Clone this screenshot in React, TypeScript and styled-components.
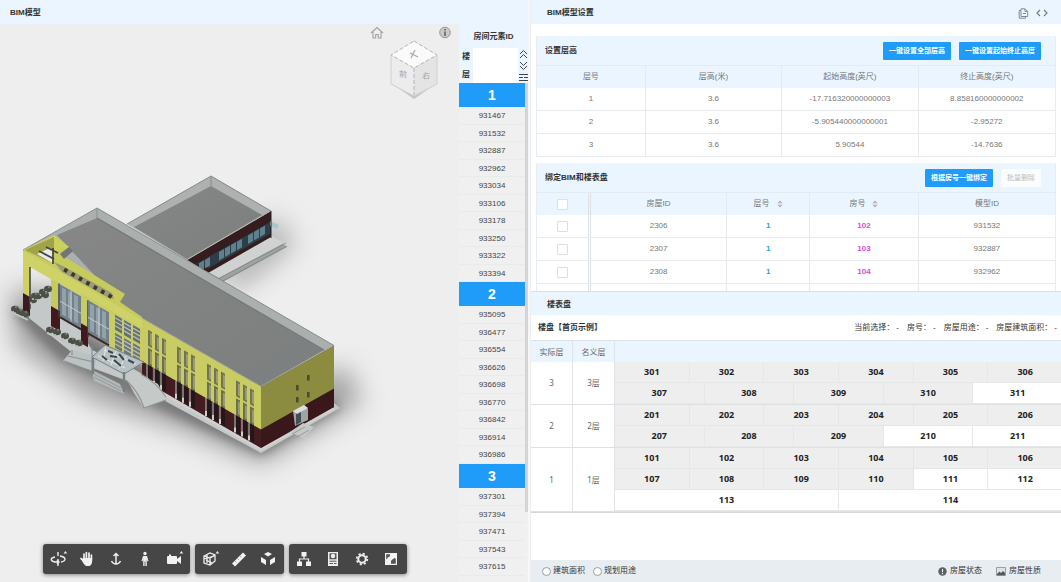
import React from "react";
import styled, { createGlobalStyle } from "styled-components";

const GlobalStyle = createGlobalStyle`
  * { box-sizing: border-box; }
  body {
    margin: 0;
    background: #fff;
    color: #333;
    font: 8px/12px "Liberation Sans", "Noto Sans CJK SC", sans-serif;
  }
  button, input { font: inherit; color: inherit; margin: 0; padding: 0; }
  button { border: 0; background: none; cursor: pointer; }
  h1, h2, h3, ul, p, dl, dd { margin: 0; padding: 0; font-size: 8px; }
  ul { list-style: none; }
`;

const BLUE = "#1f9bfa";
const PALE = "#eaf5ff";

const Page = styled.main`
  display: grid;
  grid-template-columns: minmax(0, 530fr) minmax(0, 531fr);
  height: 100vh;
  overflow: hidden;
`;

const ModelPanel = styled.section`
  display: flex;
  flex-direction: column;
  min-height: 0;
  border-right: 2px solid #f6f7f8;
`;

const RightColumn = styled.div`
  display: flex;
  flex-direction: column;
  min-height: 0;
`;

const HalfPanel = styled.section`
  flex: 1 1 0;
  min-height: 0;
  display: flex;
  flex-direction: column;
  overflow: hidden;
  border-left: 1px solid #eceef0;
`;

const PanelHeader = styled.header<{ $inset?: number; $ruled?: boolean }>`
  flex: none;
  display: flex;
  align-items: center;
  justify-content: space-between;
  height: 24px;
  padding: 2px 13px 0 ${(p) => p.$inset ?? 10}px;
  background: ${PALE};
  border-top: ${(p) => (p.$ruled ? "1px solid #dcdfe2" : "0")};
`;

const HeaderActions = styled.div`
  display: flex;
  align-items: center;
  gap: 7px;
  button { display: flex; }
`;

const ModelBody = styled.div`
  flex: 1;
  min-height: 0;
  display: flex;
`;

const Viewer = styled.div`
  position: relative;
  flex: 1;
  min-width: 0;
  overflow: hidden;
  background: #eeeeee;
`;

const Scene = styled.svg`
  display: block;
`;

const ViewerCorner = styled.div`
  position: absolute;
  top: 2px;
  right: 7px;
  display: flex;
  justify-content: space-between;
  width: 82px;
`;

const CubeButton = styled.button`
  position: absolute;
  top: 14px;
  right: 19px;
`;

const Toolbar = styled.div`
  position: absolute;
  bottom: 8px;
  left: 43px;
  display: flex;
  gap: 5px;
`;

const ToolGroup = styled.div`
  display: flex;
  padding: 0 1px;
  height: 30px;
  border-radius: 3px;
  background: #464646;
  box-shadow: 0 1px 4px rgba(0, 0, 0, 0.45);
`;

const ToolButton = styled.button`
  width: 29px;
  display: flex;
  align-items: center;
  justify-content: center;
`;

const Sidebar = styled.aside`
  flex: none;
  width: 69px;
  display: flex;
  flex-direction: column;
  min-height: 0;
  background: #f0f0f0;
`;

const SidebarTitle = styled.h2`
  flex: none;
  height: 24px;
  line-height: 26px;
  text-align: center;
  background: ${PALE};
`;

const FloorFilter = styled.div`
  flex: none;
  display: flex;
  height: 35px;
  background: ${PALE};
  label {
    width: 14px;
    padding: 0 3px;
    font-weight: bold;
    line-height: 18px;
    word-break: break-all;
  }
  input {
    width: 45px;
    border: 0;
    background: #fff;
  }
`;

const FilterIcons = styled.div`
  flex: 1;
  display: flex;
  flex-direction: column;
  align-items: center;
  justify-content: space-between;
  padding-top: 1px;
  button { display: flex; }
`;

const ScrollArea = styled.div`
  flex: 1;
  min-height: 0;
  display: flex;
  overflow: hidden;
`;

const FloorList = styled.div`
  flex: 1;
  min-width: 0;
`;

const FloorHeading = styled.h3`
  height: 24px;
  background: ${BLUE};
  color: #fff;
  font-size: 14px;
  line-height: 24px;
  text-align: center;
`;

const ElementRow = styled.li`
  height: 17px;
  border-bottom: 1px solid #e9eaea;
  line-height: 17px;
  text-align: center;
  color: #444;
  &:nth-child(odd) { height: 18px; }
`;

const ScrollThumb = styled.div`
  flex: none;
  width: 3px;
  height: 86%;
  background: #d2d4d6;
`;

const SettingsBody = styled.div`
  display: flex;
  flex-direction: column;
  gap: 6px;
  padding: 12px 5px 0;
`;

const Card = styled.section`
  border: solid #e9edf0;
  border-width: 0 1px;
`;

const CardHeader = styled.header`
  display: flex;
  align-items: center;
  justify-content: space-between;
  height: 29px;
  padding: 0 14px 0 8px;
  background: ${PALE};
`;

const ButtonRow = styled.div`
  display: flex;
  gap: 8px;
`;

const ActionButton = styled.button`
  height: 18px;
  padding: 0 6px;
  border-radius: 1px;
  background: ${BLUE};
  color: #fff;
  font-size: 7px;
  font-weight: bold;
  line-height: 18px;
  white-space: nowrap;
  &:disabled { background: #fbfcfd; color: #b9bcc0; font-weight: normal; }
`;

const DataTable = styled.table`
  width: 100%;
  table-layout: fixed;
  border-collapse: separate;
  border-spacing: 0;
  color: #777;
  th, td {
    height: 23px;
    padding: 0;
    border: solid #e8ebee;
    border-width: 0 1px 1px 0;
    text-align: center;
    font-weight: normal;
  }
  th { background: ${PALE}; border-color: #e2ebf3; border-width: 1px 1px 0 0; }
  th:last-child, td:last-child { border-right: 0; }
`;

const CheckCell = styled.td`
  border-right: 3px double #dde1e5 !important;
`;

const Check = styled.input`
  appearance: none;
  display: block;
  width: 11px;
  height: 11px;
  margin: 0 auto;
  border: 1px solid #dcdfe3;
  border-radius: 1px;
  background: #fff;
`;

const Strong = styled.strong<{ $tone: string }>`
  color: ${(p) => p.$tone};
`;

const SortHead = styled.span`
  display: inline-flex;
  align-items: center;
  gap: 7px;
`;

const BlockTitle = styled.div`
  flex: none;
  display: flex;
  align-items: center;
  justify-content: space-between;
  height: 26px;
  padding: 0 4px 0 7px;
  border-bottom: 1px solid #dfe2e5;
`;

const Facts = styled.dl`
  display: flex;
  gap: 8px;
  white-space: nowrap;
  div { display: flex; gap: 2px; }
`;

const MatrixArea = styled.div`
  flex: 1;
  min-height: 0;
  overflow: hidden;
`;

const Matrix = styled.table`
  width: calc(100% + 2px);
  table-layout: fixed;
  border-collapse: separate;
  border-spacing: 0;
  border-bottom: 1px solid #d5d8da;
  color: #666;
  font-family: "Noto Sans", "Noto Sans CJK SC", sans-serif;
  th { height: 21px; background: ${PALE}; font-weight: normal; }
  th, td { padding: 0; text-align: center; border-right: 1px solid #e0e4e8; }
  th:last-child, td:last-child { border-right: 0; }
  td { border-bottom: 1px solid #dfe2e4; }
`;

const RoomLine = styled.div`
  display: flex;
`;

const Room = styled.button<{ $free?: boolean }>`
  flex: 1 1 0;
  height: 21px;
  border: solid #e5e7e8;
  border-width: 0 1px 1px 0;
  background: ${(p) => (p.$free ? "#fff" : "#eeeeee")};
  color: #222;
  font-size: 9px;
  font-weight: bold;
  line-height: 20px;
`;

const Footer = styled.footer`
  flex: none;
  display: flex;
  align-items: center;
  justify-content: space-between;
  height: 22px;
  padding: 0 20px 0 11px;
  background: #e8edf2;
`;

const FooterGroup = styled.div<{ $gap: number }>`
  display: flex;
  gap: ${(p) => p.$gap}px;
`;

const RadioLabel = styled.label`
  display: flex;
  align-items: center;
  gap: 2px;
  input {
    appearance: none;
    width: 9px;
    height: 9px;
    border: 1px solid #999da1;
    border-radius: 50%;
    background: #fff;
  }
`;

const Legend = styled.button`
  display: flex;
  align-items: center;
  gap: 3px;
`;

/* Building model, drawn in an isometric projection */

const SLOPE = 0.5735;
const front = (x: number, v: number) => `${x},${(250 + (x - 23) * SLOPE + v).toFixed(1)}`;
const frontQuad = (x1: number, x2: number, v1: number, v2: number) =>
  [front(x1, v1), front(x2, v1), front(x2, v2), front(x1, v2)].join(" ");
const side = (x: number, v: number) => `${x},${(386.5 - (x - 261) * 0.562 + v).toFixed(1)}`;
const sideQuad = (x1: number, x2: number, v1: number, v2: number) =>
  [side(x1, v1), side(x2, v1), side(x2, v2), side(x1, v2)].join(" ");

const windowBays = [148, 177, 207, 236];

const Building = () => (
  <Scene width="458" height="558" viewBox="0 24 458 558" aria-label="BIM建筑模型">
    <defs>
      <filter id="soft" x="-30%" y="-30%" width="160%" height="160%">
        <feGaussianBlur stdDeviation="13" />
      </filter>
      <filter id="tight" x="-30%" y="-30%" width="160%" height="160%">
        <feGaussianBlur stdDeviation="5" />
      </filter>
      <linearGradient id="roof" x1="0" y1="0" x2="1" y2="1">
        <stop offset="0" stopColor="#868786" />
        <stop offset="1" stopColor="#7c7f7f" />
      </linearGradient>
    </defs>
    <polygon points="10,290 60,290 270,405 345,365 362,402 262,464 180,430 90,400 15,345" fill="#555" opacity=".5" filter="url(#soft)" />
    <polygon points="215,275 275,215 296,245 240,290" fill="#777" opacity=".5" filter="url(#soft)" />
    <polygon points="12,312 40,308 262,440 334,400 341,408 262,456 150,405 60,360" fill="#444" opacity=".45" filter="url(#tight)" />

    {/* rear wing */}
    <polygon points="205,272 271,235 287,247 223,282" fill="#9fa2a2" />
    <polygon points="208,272 271,235 284,243 219,278" fill="#d0d2d1" />
    <path d="M216 280L286 243M219 283L287 246" stroke="#777c7d" strokeWidth=".7" />
    <polygon points="187,260 271,211 271,237 208,273" fill="#351c1e" />
    <polygon points="196,264 270,222 270,234 209,268" fill="#2c3e49" />
    {[199, 205, 219, 225, 231, 237, 248, 254, 260].map((x) => (
      <polygon key={x} points={`${x},${264.5 - (x - 197) * 0.57} ${x + 5},${261.5 - (x - 197) * 0.57} ${x + 5},${270 - (x - 197) * 0.57} ${x},${273 - (x - 197) * 0.57}`} fill="#6e929e" opacity=".8" />
    ))}
    <polygon points="270,221 279,225 277,229 270,226" fill="#a9c7c9" />
    <path d="M271 211V238" stroke="#20282b" strokeWidth="1" />
    <polygon points="127,224 211,176 271,211 187,260" fill="#aeb1b0" />
    <polygon points="134,227 211,186 262,215 187,259" fill="url(#roof)" />
    <path d="M127 224L211 176L271 211" stroke="#70787a" fill="none" strokeWidth=".8" />
    <path d="M211 177V186" stroke="#7c8082" strokeWidth=".8" />

    {/* main volume: base and walls */}
    <polygon points="30,297 55,287 92,350 132,368 261,444 334,403 340,408 261,453 130,382 90,367 29,318" fill="#c5c8c8" />
    <polygon points={frontQuad(23, 30, 0, 62)} fill="#3c1b20" />
    <polygon points={frontQuad(51, 58, 12, 58)} fill="#c6ca5c" />
    <polygon points={frontQuad(51, 60, 40, 60)} fill="#43191e" />
    <polygon points={frontQuad(142, 261, 0, 62)} fill="#421c20" />
    <polygon points={frontQuad(23, 30, 0, 43)} fill="#cfd163" />
    <polygon points={frontQuad(23, 142, 0, 13)} fill="#ced267" />
    <polygon points={frontQuad(81, 142, 10, 47)} fill="#c7cc65" />
    <polygon points={frontQuad(142, 261, 0, 43)} fill="#c8cc62" />
    <polygon points={frontQuad(81, 88, 40, 60)} fill="#43191e" />
    <path d={`M${front(30, 13)}L${front(30, 55)}M${front(59, 13)}L${front(59, 47)}M${front(88, 13)}L${front(88, 50)}`} stroke="#41403b" strokeWidth="1.5" />
    {[60, 88].map((x) => (
      <g key={x}>
        <polygon points={frontQuad(x, x + 21, 13, 45)} fill="#71808b" />
        {[2, 8, 14].map((d) => (
          <polygon key={d} points={frontQuad(x + d, x + d + 4, 15, 42)} fill="#93a1aa" />
        ))}
        <path d={`M${front(x, 30)}L${front(x + 21, 30)}M${front(x + 11, 13)}L${front(x + 11, 44)}`} stroke="#c5cacb" strokeWidth="1" />
        <path d={`M${front(x, 46)}L${front(x + 21, 46)}`} stroke="#382629" strokeWidth="2" />
      </g>
    ))}
    {[115, 124, 133].map((x) => (
      <g key={x}>
        <polygon points={frontQuad(x, x + 7, 12, 27)} fill="#66706f" />
        <polygon points={frontQuad(x, x + 7, 30, 45)} fill="#6e7777" />
        {[15, 19, 23, 33, 37, 41].map((v) => (
          <path key={v} d={`M${front(x, v)}L${front(x + 7, v)}`} stroke="#b6bcb8" strokeWidth="1.3" />
        ))}
      </g>
    ))}
    {windowBays.map((bay) =>
      [0, 7, 14].map((d) => (
        <g key={bay + d}>
          <polygon points={frontQuad(bay + d, bay + d + 4, 8, 24)} fill="#74754e" />
          <polygon points={frontQuad(bay + d + 2, bay + d + 4, 10, 22)} fill="#9a9b78" />
          <polygon points={frontQuad(bay + d, bay + d + 4, 26, 43)} fill="#6e6f4c" />
          <polygon points={frontQuad(bay + d + 2, bay + d + 4, 28, 41)} fill="#969876" />
          <polygon points={frontQuad(bay + d, bay + d + 4, 43, 60)} fill="#22171b" />
          <path d={`M${front(bay + d - 1, 43)}L${front(bay + d - 1, 58)}`} stroke="#b0aaa3" strokeWidth="1.2" />
          <path d={`M${front(bay + d - 1, 56)}L${front(bay + d - 1, 61)}`} stroke="#cfcfcd" strokeWidth="2" />
        </g>
      )),
    )}
    <polygon points={sideQuad(261, 334, 0, 62)} fill="#3a171b" />
    <polygon points={sideQuad(261, 334, 0, 43)} fill="#8b8c40" />
    <path d={`M${front(142, 63)}L${front(261, 63)}L${side(334, 63)}`} stroke="#d0d1d0" strokeWidth="2.5" fill="none" />
    {[[296, 385], [307, 375], [296, 397], [307, 392]].map(([x, y]) => (
      <rect key={`${x}-${y}`} x={x} y={y} width="2.6" height="5.5" fill="#4c4b2c" />
    ))}
    <polygon points="293,411 304,405 308,409 308,420 295,426" fill="#9da5a5" />
    <polygon points="296,413 301,411 301,422 296,425" fill="#435057" />
    <polygon points="293,411 304,405 308,408 297,414" fill="#dddfde" />
    <polygon points="290,432 303,423 314,427 303,438" fill="#c4c8c6" />
    <path d="M292 434L305 427M297 437L309 430" stroke="#858a89" strokeWidth=".7" />

    {/* main roof */}
    <polygon points="23,250 97,208 334,345.5 261,386.5" fill="#abafae" />
    <polygon points="57,235 97,218 324,350 261,386 125,308" fill="url(#roof)" />
    <path d="M97 218L324 350" stroke="#737a7b" strokeWidth="1.3" />
    <path d="M23 250L97 208L334 345.5" stroke="#7f8788" fill="none" strokeWidth=".9" />
    <path d="M97 209V218" stroke="#858989" strokeWidth=".8" />
    <polygon points="23,250 54,235 69,247 60,254 125,294 120,302 142,317 142,320" fill="#c7cb5c" />
    <polygon points="25,250 54,237 54,264" fill="#a1a34b" />
    <polygon points="37,254 50,248 54,252 54,264" fill="#e9eaea" />
    <polygon points="54,235 69,247 54,253" fill="#cbd05c" />
    <path d="M39 251L54 259M46 247L58 253M53 248V264" stroke="#45433a" strokeWidth="1.8" />
    <polygon points="54,262 63,266 112,293 114,299 105,296 62,272" fill="#9c9a79" />
    {[0, 1, 2, 3, 4, 5, 6].map((i) => (
      <rect key={i} x={64 + i * 7.4} y={268 + i * 4.3} width="3.6" height="4" fill="#373a28" transform={`rotate(28 ${65 + i * 7.4} ${270 + i * 4.3})`} />
    ))}
    <polygon points="69,247 73,251 64,259 60,254" fill="#737474" />

    {/* planting */}
    {[[15, 309], [20, 312], [25, 314], [33, 300], [38, 296], [43, 292], [48, 289], [50, 330], [57, 332], [65, 336], [72, 341], [79, 343], [35, 296], [45, 295]].map(([x, y]) => (
      <g key={`${x}-${y}`}>
        <ellipse cx={x} cy={y} rx="4" ry="3.2" fill="#495047" />
        <circle cx={x + 1} cy={y - 2} r="1.2" fill="#79766d" />
        <circle cx={x - 2} cy={y + 3} r="1.1" fill="#babdbb" />
      </g>
    ))}
    <path d="M47 333L82 350M13 313L28 320" stroke="#c2c5c3" strokeWidth="1.4" />

    {/* entrance */}
    <polygon points="63,361 72,350 98,356 93,371 80,367" fill="#bcc2c1" />
    <path d="M64 361L91 371M68 356L94 362M72 350V355M92 346V372" stroke="#858f90" fill="none" strokeWidth="1.1" />
    <polygon points="92,370 120,384 124,394 94,381" fill="#b1b8b7" />
    <path d="M94 374L121 388M94 377L121 391" stroke="#8b9493" strokeWidth=".8" />
    <polygon points="124,375 140,374 158,384 166,400 144,408 134,393" fill="#c5c9c8" />
    <path d="M126 380Q139 392 144 408L166 400M141 374Q157 383 166 397" stroke="#8f9796" fill="none" strokeWidth="1.2" />
    <polygon points="92,357 105,345 144,362 124,374" fill="#b9c0c1" stroke="#76838a" />
    <path d="M98 356L125 368M104 350L136 364M106 347L103 361M116 351L111 365M126 356L119 369" stroke="#e3e6e5" strokeWidth="1" />
    <path d="M108 351L113 353M119 354L124 360M102 356L107 360M114 360L121 366M128 360L134 363M110 356L117 357" stroke="#394850" strokeWidth="2" />
    <path d="M93 358V374M124 372V392" stroke="#748083" strokeWidth="2.4" />
  </Scene>
);

const ViewCube = () => (
  <svg width="52" height="62" viewBox="0 0 52 62" aria-hidden="true">
    <polygon points="3,45 26,58 49,45 26,61" fill="#aaa" opacity=".6" />
    <polygon points="26,3 49,17 26,30 3,17" fill="#fafafa" />
    <polygon points="3,17 26,30 26,58 3,46" fill="#ececec" />
    <polygon points="49,17 26,30 26,58 49,46" fill="#e4e4e4" />
    <path d="M26 3L49 17L26 30L3 17ZM26 30V58" fill="none" stroke="#b4b4b4" strokeDasharray="4 2" />
    <path d="M3 17V46L26 58L49 46V17" fill="none" stroke="#d0d0d0" />
    <path d="M22 15L30 19M27 12L23 20" stroke="#aaa" strokeWidth="1.3" />
    <text x="11" y="40" fontSize="8" fill="#a4a4a4" transform="skewY(8) translate(0 -3)">前</text>
    <text x="34" y="40" fontSize="8" fill="#a4a4a4" transform="skewY(-8) translate(0 6)">右</text>
  </svg>
);

const toolIcons: Record<string, React.ReactNode> = {
  环绕: (
    <g fill="none" stroke="#eee" strokeWidth="1.4">
      <path d="M5 6C0 7 0 10 5 11H8M10 5C16 6 17 10 11 11M8 1V5M8 8V15" />
      <path d="M7 9L9 11L7 13" />
    </g>
  ),
  平移: (
    <g>
      <path d="M5 8V3M7.4 7V1.5M10 7V2M12.4 8V4M4.8 10L2 7.5" stroke="#f2f2f2" strokeWidth="1.7" strokeLinecap="round" />
      <path d="M4 7H13.2V10Q13 14 10.5 15H7Q5 14 3 10Z" fill="#f2f2f2" />
    </g>
  ),
  缩放: (
    <path d="M8 3V13M5.5 5L8 2.5L10.5 5M3.5 10Q5 13 8 13Q11 13 12.5 10" fill="none" stroke="#eee" strokeWidth="1.5" />
  ),
  漫游: (
    <g fill="#eee">
      <circle cx="8" cy="2.5" r="1.7" />
      <path d="M6 5H10L11.5 10L10.4 10.4L9.8 8V15H8.4V10.5H7.6V15H6.2V8L5.6 10.4L4.5 10Z" />
    </g>
  ),
  相机: (
    <g fill="#f2f2f2">
      <rect x="1" y="5" width="10" height="8" rx="1" />
      <path d="M11 8L15 5V13L11 10Z" />
      <path d="M3 5H5V3.5H3Z" />
    </g>
  ),
  剖切: (
    <g fill="none" stroke="#eee" strokeWidth="1.3">
      <path d="M2 5L8 2L13 4V10L8 14L2 12ZM2 5L8 7L13 4M8 7V14" />
      <path d="M2 8L12 5M5 4V12M4 9L10 12" />
    </g>
  ),
  测量: (
    <g>
      <path d="M1 12.5L12 1.5L15 4.5L4 15.5Z" fill="#f2f2f2" />
      <path d="M4 10L5.5 11.5M6.5 7.5L8 9M9 5L10.5 6.5" stroke="#888" strokeWidth=".7" />
    </g>
  ),
  分解: (
    <g fill="#f2f2f2">
      <path d="M8 1L12 3L8 5.4L4 3Z" />
      <path d="M1 6L6 9V14L1 11ZM15 6L10 9V14L15 11Z" />
    </g>
  ),
  结构树: (
    <g fill="#f2f2f2">
      <path d="M5.5 1H10.5V5.5H5.5ZM1 10.5H6V15H1ZM10 10.5H15V15H10Z" />
      <path d="M8 5V8M3.5 11V8H12.5V11" fill="none" stroke="#eee" strokeWidth="1.2" />
    </g>
  ),
  特性: (
    <g>
      <rect x="3" y="1" width="10" height="14" fill="#eee" />
      <rect x="4.5" y="2.3" width="7" height="6" fill="#555" />
      <circle cx="8" cy="5" r="2.2" fill="#eee" />
      <path d="M4.5 10.2H11.5M4.5 12.5H8M9 12.5H11.5" stroke="#555" />
    </g>
  ),
  设置: (
    <g fill="none" stroke="#eee">
      <circle cx="8" cy="8" r="3.7" strokeWidth="2" />
      <circle cx="8" cy="8" r="5.3" strokeWidth="1.8" strokeDasharray="2.1 2.06" />
    </g>
  ),
  全屏: (
    <g>
      <rect x="2" y="2" width="12" height="12" fill="#f0f0f0" />
      <path d="M3.2 3.2H7V5L5 6.5L3.2 8.5Z" fill="#555" />
      <path d="M8 9L10.5 7.5L12.8 6V12.8H8Z" fill="#555" />
      <path d="M5.5 11.5L12 4.5M9 4H12.5V7.5" stroke="#f7f7f7" strokeWidth="1.6" fill="none" />
    </g>
  ),
};

const toolGroups = [
  ["环绕", "平移", "缩放", "漫游", "相机"],
  ["剖切", "测量", "分解"],
  ["结构树", "特性", "设置", "全屏"],
];
const withMenu = ["环绕", "相机", "剖切"];

const Tool = ({ name }: { name: string }) => (
  <ToolButton aria-label={name}>
    <svg width="20" height="20" viewBox="-1 -2 20 20" aria-hidden="true">
      {toolIcons[name]}
      {withMenu.includes(name) && <path d="M13.6 2.5L15.4 0L17.2 2.5Z" fill="#eee" />}
    </svg>
  </ToolButton>
);

const Sorter = () => (
  <svg width="6" height="8" viewBox="0 0 6 8" aria-hidden="true">
    <path d="M3 .5L5.7 3.3H.3ZM3 7.5L5.7 4.7H.3Z" fill="#aeb5bc" />
  </svg>
);

const elementGroups = [
  { floor: 1, ids: [931467, 931532, 932887, 932962, 933034, 933106, 933178, 933250, 933322, 933394] },
  { floor: 2, ids: [935095, 936477, 936554, 936626, 936698, 936770, 936842, 936914, 936986] },
  { floor: 3, ids: [937301, 937394, 937471, 937543, 937615, 937687] },
];

const heights = [
  ["1", "3.6", "-17.716320000000003", "8.858160000000002"],
  ["2", "3.6", "-5.905440000000001", "-2.95272"],
  ["3", "3.6", "5.90544", "-14.7636"],
];

const bindings = [
  { house: "2306", floor: "1", room: "102", model: "931532" },
  { house: "2307", floor: "1", room: "103", model: "932887" },
  { house: "2308", floor: "1", room: "104", model: "932962" },
];

const floors = [
  { floor: 3, lines: [[301, 302, 303, 304, 305, 306], [307, 308, 309, 310, 311]] },
  { floor: 2, lines: [[201, 202, 203, 204, 205, 206], [207, 208, 209, 210, 211]] },
  { floor: 1, lines: [[101, 102, 103, 104, 105, 106], [107, 108, 109, 110, 111, 112], [113, 114]] },
];
const freeRooms = new Set([311, 210, 211, 111, 112, 113, 114]);

const facts = ["当前选择：", "房号：", "房屋用途：", "房屋建筑面积："];

export default function App() {
  return (
    <>
      <GlobalStyle />
      <Page>
        <ModelPanel>
          <PanelHeader><h1>BIM模型</h1></PanelHeader>
          <ModelBody>
            <Viewer>
              <Building />
              <ViewerCorner>
                <svg width="14" height="14" viewBox="0 0 14 14" fill="none" stroke="#a2a2a2" strokeWidth="1.1" aria-label="主视图">
                  <path d="M1 7L7 1.5L13 7M3 6V12H5.7V8.5H8.3V12H11V6" />
                </svg>
                <svg width="14" height="14" viewBox="0 0 14 14" aria-label="信息">
                  <circle cx="7" cy="6.5" r="5.3" fill="#c9c9c9" stroke="#999" />
                  <path d="M7 3V4.6M7 5.6V10" stroke="#777" strokeWidth="2" />
                </svg>
              </ViewerCorner>
              <CubeButton aria-label="视图方向"><ViewCube /></CubeButton>
              <Toolbar>
                {toolGroups.map((group) => (
                  <ToolGroup key={group[0]}>
                    {group.map((name) => <Tool key={name} name={name} />)}
                  </ToolGroup>
                ))}
              </Toolbar>
            </Viewer>
            <Sidebar>
              <SidebarTitle>房间元素ID</SidebarTitle>
              <FloorFilter>
                <label htmlFor="floor">楼层</label>
                <input id="floor" type="text" />
                <FilterIcons>
                  <button aria-label="上移">
                    <svg width="9" height="10" viewBox="0 0 9 10" fill="none" stroke="#444"><path d="M1 5L4.5 1.5L8 5M1 9L4.5 5.5L8 9" /></svg>
                  </button>
                  <button aria-label="下移">
                    <svg width="9" height="10" viewBox="0 0 9 10" fill="none" stroke="#444"><path d="M1 1L4.5 4.5L8 1M1 5L4.5 8.5L8 5" /></svg>
                  </button>
                  <button aria-label="列表">
                    <svg width="9" height="10" viewBox="0 0 9 10" fill="none" stroke="#444"><path d="M0 1.5H9M0 4.5H4M5 4.5H9M0 7.5H9" /></svg>
                  </button>
                </FilterIcons>
              </FloorFilter>
              <ScrollArea>
                <FloorList>
                  {elementGroups.map(({ floor, ids }) => (
                    <section key={floor}>
                      <FloorHeading>{floor}</FloorHeading>
                      <ul>{ids.map((id) => <ElementRow key={id}>{id}</ElementRow>)}</ul>
                    </section>
                  ))}
                </FloorList>
                <ScrollThumb />
              </ScrollArea>
            </Sidebar>
          </ModelBody>
        </ModelPanel>

        <RightColumn>
          <HalfPanel>
            <PanelHeader $inset={16}>
              <h1>BIM模型设置</h1>
              <HeaderActions>
                <button aria-label="复制">
                  <svg width="11" height="11" viewBox="0 0 11 11" fill="none" stroke="#858a8f"><path d="M3 2.5V.8H7L9.7 3.5V8.5H3V2.5ZM7 1V3.5H9.5M3 2.5H1.2V10.2H7.5V8.5M5 5.5H8" /></svg>
                </button>
                <button aria-label="代码">
                  <svg width="12" height="10" viewBox="0 0 12 10" fill="none" stroke="#777c82" strokeWidth="1.2"><path d="M4 2L1 5L4 8M8 2L11 5L8 8" /></svg>
                </button>
              </HeaderActions>
            </PanelHeader>
            <SettingsBody>
              <Card>
                <CardHeader>
                  <h2>设置层高</h2>
                  <ButtonRow>
                    <ActionButton>一键设置全部层高</ActionButton>
                    <ActionButton>一键设置起始终止高度</ActionButton>
                  </ButtonRow>
                </CardHeader>
                <DataTable>
                  <colgroup><col style={{ width: "21%" }} /><col /><col /><col /></colgroup>
                  <thead>
                    <tr><th>层号</th><th>层高(米)</th><th>起始高度(英尺)</th><th>终止高度(英尺)</th></tr>
                  </thead>
                  <tbody>
                    {heights.map((row) => (
                      <tr key={row[0]}>{row.map((cell, i) => <td key={i}>{cell}</td>)}</tr>
                    ))}
                  </tbody>
                </DataTable>
              </Card>
              <Card>
                <CardHeader>
                  <h2>绑定BIM和楼表盘</h2>
                  <ButtonRow>
                    <ActionButton>根据房号一键绑定</ActionButton>
                    <ActionButton disabled>批量删除</ActionButton>
                  </ButtonRow>
                </CardHeader>
                <DataTable>
                  <colgroup>
                    <col style={{ width: "54px" }} /><col />
                    <col style={{ width: "16%" }} /><col style={{ width: "21%" }} /><col />
                  </colgroup>
                  <thead>
                    <tr>
                      <CheckCell as="th"><Check type="checkbox" aria-label="全选" /></CheckCell>
                      <th>房屋ID</th>
                      <th><SortHead>层号<Sorter /></SortHead></th>
                      <th><SortHead>房号<Sorter /></SortHead></th>
                      <th>模型ID</th>
                    </tr>
                  </thead>
                  <tbody>
                    {bindings.map((b) => (
                      <tr key={b.house}>
                        <CheckCell><Check type="checkbox" aria-label={`选择 ${b.house}`} /></CheckCell>
                        <td>{b.house}</td>
                        <td><Strong $tone="#2f9fd6">{b.floor}</Strong></td>
                        <td><Strong $tone="#db4ad8">{b.room}</Strong></td>
                        <td>{b.model}</td>
                      </tr>
                    ))}
                  </tbody>
                  <tfoot>
                    <tr><CheckCell /><td /><td /><td /><td /></tr>
                  </tfoot>
                </DataTable>
              </Card>
            </SettingsBody>
          </HalfPanel>

          <HalfPanel>
            <PanelHeader $inset={16} $ruled><h1>楼表盘</h1></PanelHeader>
            <BlockTitle>
              <h2>楼盘【首页示例】</h2>
              <Facts>
                {facts.map((name) => (
                  <div key={name}><dt>{name}</dt><dd>-</dd></div>
                ))}
              </Facts>
            </BlockTitle>
            <MatrixArea>
              <Matrix>
                <colgroup><col style={{ width: "42px" }} /><col style={{ width: "42px" }} /><col /></colgroup>
                <thead><tr><th>实际层</th><th>名义层</th><th aria-label="房间" /></tr></thead>
                <tbody>
                  {floors.map(({ floor, lines }) => (
                    <tr key={floor}>
                      <td>{floor}</td>
                      <td>{floor}层</td>
                      <td>
                        {lines.map((line) => (
                          <RoomLine key={line[0]}>
                            {line.map((room) => <Room key={room} $free={freeRooms.has(room)}>{room}</Room>)}
                          </RoomLine>
                        ))}
                      </td>
                    </tr>
                  ))}
                </tbody>
              </Matrix>
            </MatrixArea>
            <Footer>
              <FooterGroup $gap={8}>
                <RadioLabel><input type="radio" name="colour-by" />建筑面积</RadioLabel>
                <RadioLabel><input type="radio" name="colour-by" />规划用途</RadioLabel>
              </FooterGroup>
              <FooterGroup $gap={14}>
                <Legend>
                  <svg width="9" height="9" viewBox="0 0 9 9" aria-hidden="true"><circle cx="4.5" cy="4.5" r="4.2" fill="#5c6064" /><path d="M4.5 2V5.2M4.5 6V7.2" stroke="#e8edf2" strokeWidth="1.1" /></svg>
                  房屋状态
                </Legend>
                <Legend>
                  <svg width="10" height="9" viewBox="0 0 10 9" aria-hidden="true"><path d="M.5 .5H9.5V8.5H.5Z" fill="#dfe3e7" stroke="#9a9fa4" /><path d="M1 7L3.5 4.5L5 6L7 4L9 6V8.3H1Z" fill="#55595d" /></svg>
                  房屋性质
                </Legend>
              </FooterGroup>
            </Footer>
          </HalfPanel>
        </RightColumn>
      </Page>
    </>
  );
}
